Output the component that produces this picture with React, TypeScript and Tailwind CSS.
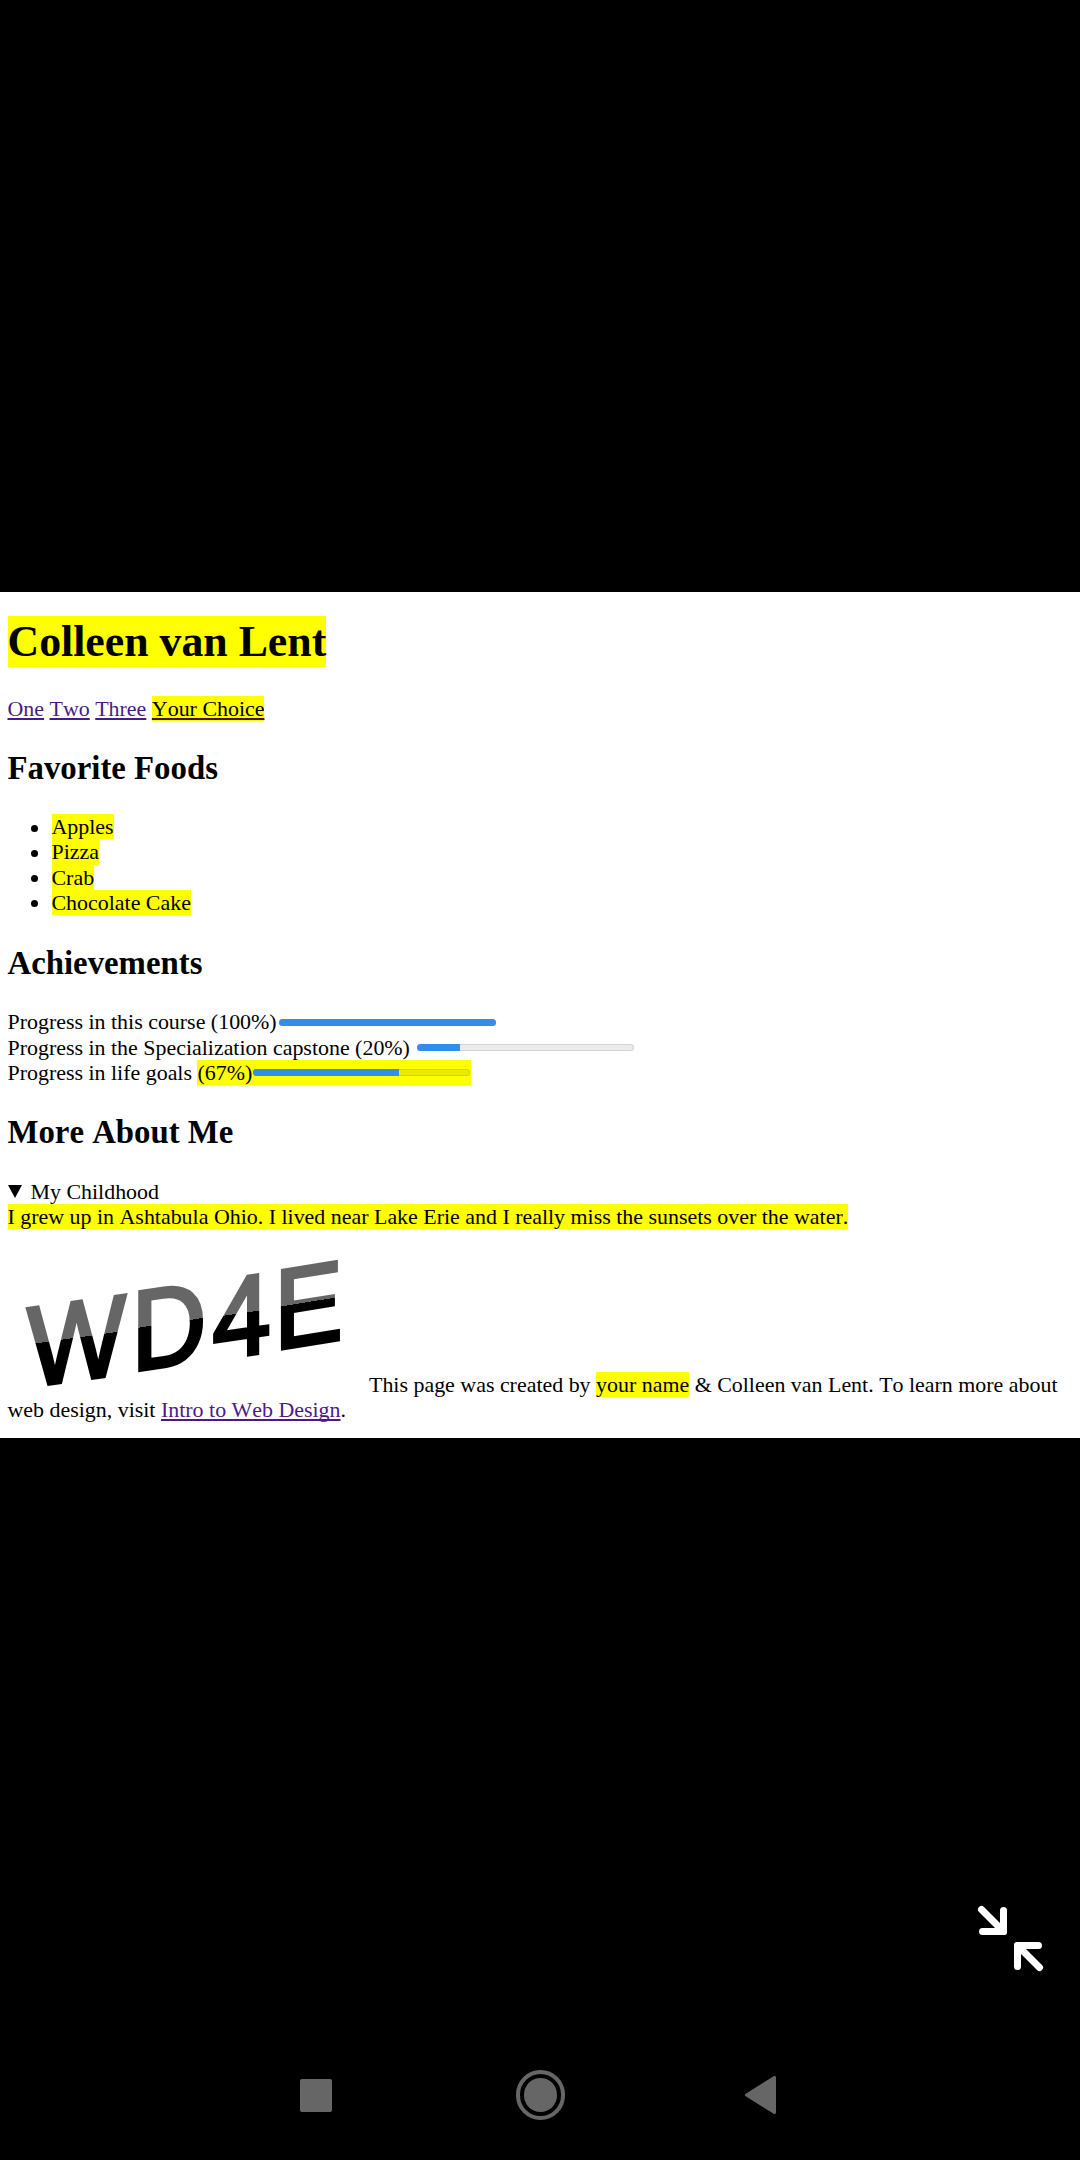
import React from "react";

function Mark({ children }: { children: React.ReactNode }) {
  return <span className="inline-block bg-[#ffff00]">{children}</span>;
}

function Link({ children }: { children: React.ReactNode }) {
  return (
    <a className="text-[#4b1a86] underline decoration-2 underline-offset-[2px] [text-decoration-skip-ink:none]">
      {children}
    </a>
  );
}

function Heading({ children }: { children: React.ReactNode }) {
  return <h2 className="text-[32.8px] leading-[38px] font-bold">{children}</h2>;
}

function Bar({ value }: { value: number }) {
  return (
    <span className="mt-px block h-[7px] w-[217px] overflow-hidden rounded-full bg-black/[0.08] shadow-[inset_0_0_0_1px_rgba(0,0,0,0.1)]">
      <span className="block h-full bg-[#318fe9]" style={{ width: `${value}%` }} />
    </span>
  );
}

const letters = [
  { char: "W", transform: "matrix(1.043 -0.145 0 1.135 27.2 147)" },
  { char: "D", transform: "matrix(1.035 -0.156 0 1.135 131.6 131.2)" },
  { char: "4", transform: "matrix(1.045 -0.15 0 1.135 212.4 119.8)" },
  { char: "E", transform: "matrix(1.025 -0.166 0 1.135 274.2 110)" },
];

function Logo() {
  return (
    <svg className="block h-[168px] w-[362px] shrink-0" viewBox="0 -11 362 168" aria-label="WD4E">
      <defs>
        <linearGradient id="split" gradientUnits="userSpaceOnUse" x1="0" y1="-70" x2="0" y2="0">
          <stop offset="0.465" stopColor="#666666" />
          <stop offset="0.465" stopColor="#000000" />
        </linearGradient>
      </defs>
      <g fontFamily="Liberation Sans, Arial, sans-serif" fontSize="100" fill="url(#split)" stroke="url(#split)" strokeWidth="3.4">
        {letters.map((l) => (
          <text key={l.char} transform={l.transform}>
            {l.char}
          </text>
        ))}
      </g>
    </svg>
  );
}

export default function App() {
  return (
    <div className="flex h-[2160px] w-[1080px] flex-col bg-black pt-[592px]">
      <main className="h-[846px] shrink-0 overflow-hidden bg-white pt-6 pl-[7.5px] font-['Liberation_Serif','Times_New_Roman',serif] text-[21.93px] leading-[25.2px] whitespace-nowrap text-black [font-kerning:none]">
        <h1 className="flex text-[43.8px] leading-[50.5px] font-bold">
          <Mark>Colleen van Lent</Mark>
        </h1>

        <nav className="mt-[29.5px] flex gap-[5.5px]">
          <Link>One</Link>
          <Link>Two</Link>
          <Link>Three</Link>
          <a className="bg-[#ffff00] underline decoration-[#4a1030] decoration-2 underline-offset-[2px] [text-decoration-skip-ink:none]">Your Choice</a>
        </nav>

        <div className="mt-[27.8px]">
          <Heading>Favorite Foods</Heading>
        </div>
        <ul className="mt-[27.2px]">
          {["Apples", "Pizza", "Crab", "Chocolate Cake"].map((food) => (
            <li key={food} className="flex items-center pl-[23px]">
              <span className="mt-[3px] mr-[14px] size-[7px] rounded-full bg-black" />
              <Mark>{food}</Mark>
            </li>
          ))}
        </ul>

        <div className="mt-[29px]">
          <Heading>Achievements</Heading>
        </div>
        <div className="mt-[27.3px]">
          <div className="flex items-center gap-[2px]">
            <span>Progress in this course (100%)</span>
            <Bar value={100} />
          </div>
          <div className="flex items-center gap-[7px]">
            <span>Progress in the Specialization capstone (20%)</span>
            <Bar value={20} />
          </div>
          <div className="flex gap-[5.5px]">
            <span>Progress in life goals</span>
            <span className="flex items-center gap-px bg-[#ffff00] pr-px">
              (67%)
              <Bar value={67} />
            </span>
          </div>
        </div>

        <div className="mt-7">
          <Heading>More About Me</Heading>
        </div>
        <div className="mt-[28.1px]">
          <div className="flex items-center">
            <svg className="mr-[9px] h-[13px] w-[14px]" viewBox="0 0 14 13">
              <path d="M0 0H14L7 13Z" />
            </svg>
            <span>My Childhood</span>
          </div>
          <div className="flex">
            <Mark>I grew up in Ashtabula Ohio. I lived near Lake Erie and I really miss the sunsets over the water.</Mark>
          </div>
        </div>

        <footer>
          <div className="-ml-[7.5px] flex items-end gap-[7px]">
            <Logo />
            <p>
              This page was created by <Mark>your name</Mark> &amp; Colleen van Lent. To learn more about
            </p>
          </div>
          <p>
            web design, visit <Link>Intro to Web Design</Link>.
          </p>
        </footer>
      </main>

      <div className="mt-[466px] flex justify-end pr-[36px]">
        <svg className="h-[68px] w-[68px]" viewBox="976 1904 68 68" fill="none" stroke="#fff" strokeWidth="7" strokeLinecap="round" strokeLinejoin="round">
          <path d="M981.5 1909.5L1003 1931M1003.5 1910.5V1931.5H982.5" />
          <path d="M1003.5 1931.5L998 1931.5L1003.5 1926Z" />
          <path d="M1039.5 1967.5L1018 1946M1038.5 1945.5H1017.5V1966.5" />
          <path d="M1017.5 1945.5L1023 1945.5L1017.5 1951Z" />
        </svg>
      </div>

      <nav className="mt-[98px] flex items-center pl-[300px]">
        <span className="h-[33px] w-8 rounded-[2px] bg-[#666]" />
        <span className="ml-[184px] flex h-[50px] w-[49px] items-center justify-center rounded-full border-4 border-[#666]">
          <span className="h-[34px] w-[33px] rounded-full bg-[#666]" />
        </span>
        <svg className="ml-[180px] h-[38px] w-[31px]" viewBox="0 0 31 38">
          <path d="M1.5 19L29.5 1.5V36.5Z" fill="#666" stroke="#666" strokeWidth="3" strokeLinejoin="round" />
        </svg>
      </nav>
    </div>
  );
}
